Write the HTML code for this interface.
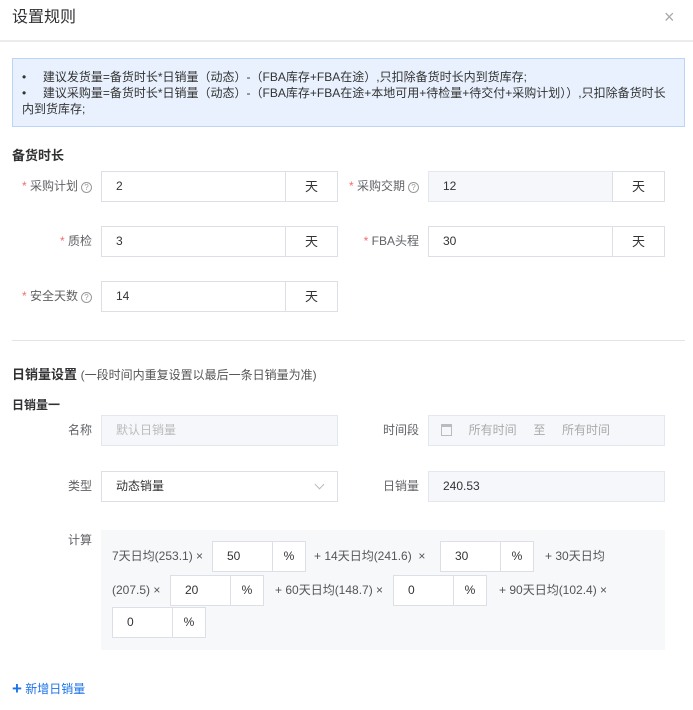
<!DOCTYPE html>
<html><head><meta charset="utf-8"><style>
*{box-sizing:border-box;margin:0;padding:0}
body{width:693px;height:710px;background:#fff;font-family:"Liberation Sans","Noto Sans CJK SC",sans-serif;font-size:12px;color:#333;position:relative;overflow:hidden}
.a{position:absolute;white-space:nowrap}
.in{position:absolute;border:1px solid #dcdfe6;background:#fff;height:31px;line-height:29px;padding-left:14px;color:#333}
.g{background:#f5f7fa;border-color:#e4e7ed}
.u{position:absolute;border:1px solid #dcdfe6;background:#fff;height:31px;line-height:29px;text-align:center;font-size:13px}
.lb{position:absolute;color:#606266;text-align:right;white-space:nowrap;line-height:31px}
.lb b{color:#f56c6c;font-weight:normal}
.q{display:inline-block;width:11px;height:11px;border:1px solid #999;border-radius:50%;font-size:8px;line-height:9px;text-align:center;color:#999;vertical-align:0px;margin-left:3px}
.ci{position:absolute;border:1px solid #dcdfe6;background:#fff;height:31px;line-height:29px;padding-left:14px}
.cu{position:absolute;border:1px solid #dcdfe6;background:#fff;height:31px;line-height:29px;text-align:center;width:34px}
.ct{position:absolute;white-space:nowrap;color:#555;line-height:31px}
</style></head><body>
<div class="a" style="left:12px;top:7px;font-size:16px;line-height:22px;color:#303133">设置规则</div>
<div class="a" style="left:664px;top:6px;font-size:18px;color:#aaa;line-height:22px">×</div>
<div class="a" style="left:0;top:40px;width:693px;height:2px;background:#ececec"></div>
<div class="a" style="left:12px;top:58px;width:673px;height:69px;background:#e8f1fd;border:1px solid #bad5f7"></div>
<div class="a" style="left:22px;top:69px;line-height:16px;color:#333;white-space:normal;width:658px">•&nbsp;&nbsp;&nbsp;&nbsp;&nbsp;建议发货量=备货时长*日销量（动态）-（FBA库存+FBA在途）,只扣除备货时长内到货库存;<br>•&nbsp;&nbsp;&nbsp;&nbsp;&nbsp;建议采购量=备货时长*日销量（动态）-（FBA库存+FBA在途+本地可用+待检量+待交付+采购计划））,只扣除备货时长<br>内到货库存;</div>
<div class="a" style="left:12px;top:145px;font-weight:bold;font-size:13px;color:#303133">备货时长</div>

<div class="lb" style="right:601px;top:171px"><b>*</b> 采购计划<span class="q">?</span></div>
<div class="in" style="left:101px;top:171px;width:185px">2</div><div class="u" style="left:285px;top:171px;width:53px">天</div>
<div class="lb" style="right:274px;top:171px"><b>*</b> 采购交期<span class="q">?</span></div>
<div class="in g" style="left:428px;top:171px;width:185px">12</div><div class="u" style="left:612px;top:171px;width:53px">天</div>

<div class="lb" style="right:601px;top:226px"><b>*</b> 质检</div>
<div class="in" style="left:101px;top:226px;width:185px">3</div><div class="u" style="left:285px;top:226px;width:53px">天</div>
<div class="lb" style="right:274px;top:226px"><b>*</b> FBA头程</div>
<div class="in" style="left:428px;top:226px;width:185px">30</div><div class="u" style="left:612px;top:226px;width:53px">天</div>

<div class="lb" style="right:601px;top:281px"><b>*</b> 安全天数<span class="q">?</span></div>
<div class="in" style="left:101px;top:281px;width:185px">14</div><div class="u" style="left:285px;top:281px;width:53px">天</div>

<div class="a" style="left:12px;top:340px;width:673px;height:1px;background:#e4e4e4"></div>
<div class="a" style="left:12px;top:364px;font-size:13px;font-weight:bold;color:#303133">日销量设置 <span style="font-weight:normal;font-size:12px;color:#555">(一段时间内重复设置以最后一条日销量为准)</span></div>
<div class="a" style="left:12px;top:396px;font-weight:bold;color:#303133">日销量一</div>

<div class="lb" style="right:601px;top:415px">名称</div>
<div class="in g" style="left:101px;top:415px;width:237px;color:#bbb">默认日销量</div>
<div class="lb" style="right:274px;top:415px">时间段</div>
<div class="in g" style="left:428px;top:415px;width:237px;color:#aaa;padding-left:12px"><span style="display:inline-block;width:11px;height:12px;border:1px solid #bbb;border-top-width:3px;vertical-align:-2px"></span>&nbsp;&nbsp;&nbsp;&nbsp;&nbsp;所有时间&nbsp;&nbsp;&nbsp;&nbsp;&nbsp;至&nbsp;&nbsp;&nbsp;&nbsp;&nbsp;所有时间</div>

<div class="lb" style="right:601px;top:471px">类型</div>
<div class="in" style="left:101px;top:471px;width:237px">动态销量<span style="position:absolute;right:14px;top:9px;width:7px;height:7px;border-right:1px solid #bbb;border-bottom:1px solid #bbb;transform:rotate(45deg)"></span></div>
<div class="lb" style="right:274px;top:471px">日销量</div>
<div class="in g" style="left:428px;top:471px;width:237px">240.53</div>

<div class="lb" style="right:601px;top:525px">计算</div>
<div class="a" style="left:101px;top:530px;width:564px;height:120px;background:#f7f8fa"></div>
<div class="ct" style="left:112px;top:541px">7天日均(253.1) ×</div>
<div class="ci" style="left:212px;top:541px;width:61px">50</div><div class="cu" style="left:272px;top:541px">%</div>
<div class="ct" style="left:314px;top:541px">+ 14天日均(241.6) &nbsp;×</div>
<div class="ci" style="left:440px;top:541px;width:61px">30</div><div class="cu" style="left:500px;top:541px">%</div>
<div class="ct" style="left:545px;top:541px">+ 30天日均</div>
<div class="ct" style="left:112px;top:575px">(207.5) ×</div>
<div class="ci" style="left:170px;top:575px;width:61px">20</div><div class="cu" style="left:230px;top:575px">%</div>
<div class="ct" style="left:275px;top:575px">+ 60天日均(148.7) ×</div>
<div class="ci" style="left:393px;top:575px;width:61px">0</div><div class="cu" style="left:453px;top:575px">%</div>
<div class="ct" style="left:499px;top:575px">+ 90天日均(102.4) ×</div>
<div class="ci" style="left:112px;top:607px;width:61px">0</div><div class="cu" style="left:172px;top:607px">%</div>

<div class="a" style="left:12px;top:680px;color:#1a73e8;line-height:18px"><span style="font-size:17px;font-weight:bold;vertical-align:-1px">+</span> 新增日销量</div>
</body></html>
